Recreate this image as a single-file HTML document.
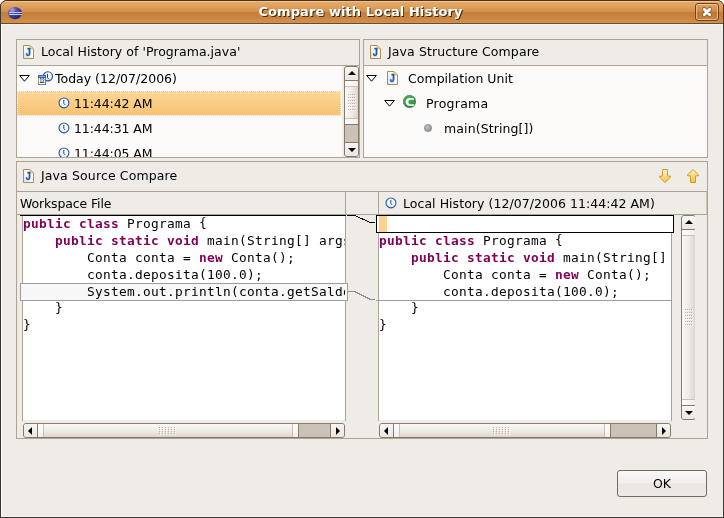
<!DOCTYPE html>
<html>
<head>
<meta charset="utf-8">
<title>Compare with Local History</title>
<style>
html,body{margin:0;padding:0;}
body{width:724px;height:518px;position:relative;overflow:hidden;background:#fff;
  font-family:"DejaVu Sans","Liberation Sans",sans-serif;font-size:12.5px;color:#000;}
.abs{position:absolute;}
#win{position:absolute;left:0;top:0;width:724px;height:518px;background:#EFEBE7;overflow:hidden;}
#titlebar{position:absolute;left:0;top:0;width:724px;height:24px;
  background:linear-gradient(to bottom,#4a3620 0px,#4a3620 1px,#F3C48F 1px,#F3C48F 2px,#E5A967 2px,#E0A15E 6px,#D18F4D 12px,#C57E37 12px,#C98340 17px,#D4914B 23px,#6E4A28 23px,#6E4A28 24px);}
#title{position:absolute;left:0;top:3px;width:721px;text-align:center;font-weight:bold;font-size:13px;color:#fff;
  text-shadow:1px 1px 0.5px #3d2810;line-height:17px;white-space:nowrap;letter-spacing:0.08px;}
.panel{position:absolute;border:1px solid #ADA395;box-sizing:border-box;}
.hline{position:absolute;height:1px;background:#ADA395;}
.vline{position:absolute;width:1px;background:#ADA395;}
.lbl{position:absolute;white-space:nowrap;line-height:17px;}
.tree{position:absolute;background:#FBFAF9;}
.code{position:absolute;background:#fff;overflow:hidden;}
.code pre{margin:0;position:absolute;left:0;top:0;}
.code pre,.mono{font-family:"DejaVu Sans Mono","Liberation Mono",monospace;font-size:12.8px;letter-spacing:0.2938px;line-height:17px;white-space:pre;}
.kw{color:#7F0055;font-weight:bold;}
svg{position:absolute;overflow:visible;}
/* scrollbars */
.sbclip{position:absolute;overflow:hidden;}
.sb{position:absolute;left:0;top:0;box-sizing:border-box;border:1px solid #857A6C;border-radius:3px;background:#CBC1B6;overflow:hidden;}
.sb.v{width:15px;}
.sb.h{height:15px;}
.sb .btn{position:absolute;background:linear-gradient(#F8F6F4,#EAE6E1);}
.sb .thumb{position:absolute;box-sizing:content-box;}
.sb .tv{background:linear-gradient(to right,#F9F8F6,#EFEBE7 50%,#DDD6CE);border-top:1px solid #857A6C;border-bottom:1px solid #857A6C;}
.sb .th{background:linear-gradient(to bottom,#F9F8F6,#EFEBE7 50%,#DDD6CE);border-left:1px solid #857A6C;border-right:1px solid #857A6C;}
.sb .cap{position:absolute;background:#C9C0B6;}
.sb .capf{position:absolute;background:rgba(255,255,255,0.55);}
.sb .grip{position:absolute;}
.sb .gv{width:8px;height:18px;background-image:radial-gradient(circle at 0.5px 0.5px,#B9AFA4 0.6px,transparent 0.7px),radial-gradient(circle at 1.5px 1.5px,#fff 0.6px,transparent 0.7px);background-size:2px 3px;}
.sb .gh{width:18px;height:8px;background-image:radial-gradient(circle at 0.5px 0.5px,#B9AFA4 0.6px,transparent 0.7px),radial-gradient(circle at 1.5px 1.5px,#fff 0.6px,transparent 0.7px);background-size:3px 2px;}
.ar{position:absolute;width:0;height:0;border:4px solid transparent;}
.ar.up{left:2.5px;top:3.7px;border-width:0 4px 4.5px 4px;border-bottom-color:#000;}
.ar.down{left:2.5px;top:4.8px;border-width:4.5px 4px 0 4px;border-top-color:#000;}
.ar.left{top:2.5px;left:3.7px;border-width:4px 4.5px 4px 0;border-right-color:#000;}
.ar.right{top:2.5px;left:4.8px;border-width:4px 0 4px 4.5px;border-left-color:#000;}
.lbl,.code pre,.mono,#title,svg.t{will-change:transform;}
.bu,.pu{font-style:normal;position:relative;}
.bu{top:-1.6px;}
.pu{top:-1px;}
</style>
</head>
<body>
<div id="win">
  <div id="titlebar"></div>
  <!-- window corner cut-outs -->
  <svg style="left:0;top:0;" width="724" height="24" viewBox="0 0 724 24">
    <path d="M0 0H5.5Q1.5 1.5 0 5.5Z" fill="#fff"/>
    <path d="M0 5.5Q1.5 1.5 5.5 0.5" fill="none" stroke="#5a3a18" stroke-width="1"/>
    <path d="M724 0H718.5Q722.5 1.5 724 5.5Z" fill="#fff"/>
    <path d="M724 5.5Q722.5 1.5 718.5 0.5" fill="none" stroke="#5a3a18" stroke-width="1"/>
  </svg>
  <!-- eclipse icon -->
  <svg style="left:8px;top:6px;" width="14" height="14" viewBox="0 0 14 14">
    <defs><radialGradient id="ecl" cx="0.3" cy="0.25" r="0.85"><stop offset="0" stop-color="#B9A6E0"/><stop offset="0.35" stop-color="#5A4FB0"/><stop offset="1" stop-color="#161A6E"/></radialGradient></defs>
    <ellipse cx="7" cy="7.1" rx="7" ry="6.2" fill="url(#ecl)"/>
    <rect x="0.8" y="6" width="13.2" height="1" fill="#B4D0F0"/>
    <rect x="0.8" y="8" width="13.2" height="1" fill="#B4D0F0"/>
  </svg>
  <div id="title">Compare with Local History</div>
  <!-- close button -->
  <div class="abs" style="left:695px;top:3px;width:24px;height:18px;box-sizing:border-box;border:1px solid #6E4520;border-radius:3px;
    background:linear-gradient(#E2A366,#CF8B48 45%,#BE7733 50%,#C98441);box-shadow:inset 0 0 0 1px rgba(255,225,190,0.55);"></div>
  <svg style="left:702px;top:7px;" width="10" height="10" viewBox="0 0 10 10">
    <path d="M2.2 2.2L7.8 7.8M7.8 2.2L2.2 7.8" stroke="#5b3a1a" stroke-width="4.4" stroke-linecap="round" opacity="0.6"/>
    <path d="M2.2 2.2L7.8 7.8M7.8 2.2L2.2 7.8" stroke="#fff" stroke-width="2.9" stroke-linecap="round"/>
  </svg>
  <!-- window borders -->
  <div class="abs" style="left:0;top:5px;width:1px;height:513px;background:#3C3732;"></div>
  <div class="abs" style="left:1px;top:24px;width:1px;height:493px;background:#FFFFFF;"></div>
  <div class="abs" style="left:723px;top:5px;width:1px;height:513px;background:#3C3732;"></div>
  <div class="abs" style="left:722px;top:24px;width:1px;height:493px;background:#F4F1EE;"></div>
  <div class="abs" style="left:0;top:517px;width:724px;height:1px;background:#3C3732;"></div>
  <div class="abs" style="left:1px;top:516px;width:722px;height:1px;background:#F4F1EE;"></div>
  <div class="abs" style="left:1px;top:24px;width:722px;height:1px;background:#FAF9F8;"></div>

  <!-- top-left panel -->
  <div class="panel" style="left:16px;top:39px;width:344px;height:119px;"></div>
  <div class="hline" style="left:17px;top:65px;width:342px;"></div>
  <div class="tree" style="left:17px;top:66px;width:325px;height:91px;"></div>
  <svg class="t" style="left:23px;top:45px;" width="11" height="14" viewBox="0 0 11 14">
<defs><linearGradient id="jf1" x1="0" y1="1" x2="1" y2="0"><stop offset="0" stop-color="#CFE0F6"/><stop offset="0.65" stop-color="#FFFFFF"/></linearGradient></defs>
<path d="M0.5 0.5H7L10.5 4V13.5H0.5Z" fill="url(#jf1)" stroke="#B08F45" stroke-width="1"/>
<path d="M7 0.5V4H10.5Z" fill="#F2D9A0" stroke="#C9A659" stroke-width="0.6"/>
<text transform="translate(2.7 10.9) scale(0.84 1)" font-family="Liberation Sans, sans-serif" font-weight="bold" font-size="10.8" fill="#2159A8" stroke="#2159A8" stroke-width="0.35">J</text>
</svg>
  <div class="lbl" style="letter-spacing:0.035px;left:41px;top:43px;">Local History of 'Programa.java'</div>
  <div class="abs" style="left:17px;top:91px;width:324px;height:25px;box-sizing:border-box;border:1px dotted #FEF8EE;background:linear-gradient(#FDD595,#F8C374);"></div>
  <svg style="left:19px;top:75px;" width="11" height="7" viewBox="0 0 11 7"><path d="M0.7 0.5H10.3L5.5 6.2Z" fill="#fff" stroke="#000" stroke-width="1" stroke-linejoin="miter"/></svg>
  <!-- today icon -->
  <svg class="t" style="left:38px;top:70px;" width="16" height="16" viewBox="0 0 16 16">
    <defs><radialGradient id="tck" cx="0.6" cy="0.35" r="0.75"><stop offset="0" stop-color="#FFFFFF"/><stop offset="0.5" stop-color="#F4F9FE"/><stop offset="1" stop-color="#BBD6F3"/></radialGradient></defs>
    <circle cx="9.9" cy="6.3" r="4.55" fill="url(#tck)" stroke="#1B4C98" stroke-width="1.2"/>
    <path d="M9.5 3.8V7.8L10.9 9.2" fill="none" stroke="#1A3C80" stroke-width="1"/>
    <rect x="0" y="5" width="8" height="10" fill="#6F7F9E"/>
    <rect x="1" y="8" width="6" height="6" fill="#fff"/>
    <rect x="0" y="8" width="1" height="5" fill="#B59D5C"/>
    <rect x="0" y="5" width="8" height="3" fill="#3567BC"/>
    <rect x="1" y="6" width="6" height="1" fill="#7FA8E6"/>
    <text transform="translate(1.4 13.05) scale(0.7 1)" font-family="Liberation Sans, sans-serif" font-weight="bold" font-size="6.9" fill="#142868">12</text>
  </svg>
  <div class="lbl" style="left:55px;top:70px;">Today (12/07/2006)</div>
  <svg style="left:57.5px;top:96.5px;" width="12" height="12" viewBox="0 0 12 12">
<defs><radialGradient id="ck5" cx="0.6" cy="0.35" r="0.75"><stop offset="0" stop-color="#FFFFFF"/><stop offset="0.5" stop-color="#F4F9FE"/><stop offset="1" stop-color="#BBD6F3"/></radialGradient></defs>
<circle cx="5.95" cy="5.95" r="4.95" fill="url(#ck5)" stroke="#2158A8" stroke-width="1.08"/>
<path d="M5.8 3V6.4L7.1 7.9" fill="none" stroke="#1A3C80" stroke-width="1"/>
</svg>
  <div class="lbl" style="letter-spacing:-0.09px;left:74px;top:95px;">11:44:42 AM</div>
  <svg style="left:57.5px;top:121.5px;" width="12" height="12" viewBox="0 0 12 12">
<defs><radialGradient id="ck6" cx="0.6" cy="0.35" r="0.75"><stop offset="0" stop-color="#FFFFFF"/><stop offset="0.5" stop-color="#F4F9FE"/><stop offset="1" stop-color="#BBD6F3"/></radialGradient></defs>
<circle cx="5.95" cy="5.95" r="4.95" fill="url(#ck6)" stroke="#2158A8" stroke-width="1.08"/>
<path d="M5.8 3V6.4L7.1 7.9" fill="none" stroke="#1A3C80" stroke-width="1"/>
</svg>
  <div class="lbl" style="letter-spacing:-0.09px;left:74px;top:120px;">11:44:31 AM</div>
  <div class="abs" style="left:17px;top:141px;width:327px;height:16px;overflow:hidden;">
    <div class="abs" style="left:-17px;top:-141px;">
    <svg style="left:57.5px;top:146.5px;" width="12" height="12" viewBox="0 0 12 12">
<defs><radialGradient id="ck7" cx="0.6" cy="0.35" r="0.75"><stop offset="0" stop-color="#FFFFFF"/><stop offset="0.5" stop-color="#F4F9FE"/><stop offset="1" stop-color="#BBD6F3"/></radialGradient></defs>
<circle cx="5.95" cy="5.95" r="4.95" fill="url(#ck7)" stroke="#2158A8" stroke-width="1.08"/>
<path d="M5.8 3V6.4L7.1 7.9" fill="none" stroke="#1A3C80" stroke-width="1"/>
</svg>
    <div class="lbl" style="letter-spacing:-0.09px;left:74px;top:145px;">11:44:05 AM</div>
    </div>
  </div>
  <div class="sbclip" style="left:344px;top:66px;width:15px;height:91px;"><div class="sb v" style="height:91px;"><div class="btn" style="left:0;top:0;width:13px;height:13px;border-bottom:1px solid #857A6C;"><i class="ar up"></i></div><div class="thumb tv" style="left:0;top:13px;width:13px;height:43px;"><b class="capf" style="left:0;top:0;width:13px;height:5px;"></b><b class="capf" style="left:0;top:38px;width:13px;height:5px;"></b><b class="cap" style="left:0;top:5px;width:13px;height:1px;"></b><b class="cap" style="left:0;top:37px;width:13px;height:1px;"></b><u class="grip gv" style="left:3px;top:13px;"></u></div><div class="btn" style="left:0;top:75px;width:13px;height:13px;border-top:1px solid #857A6C;"><i class="ar down"></i></div></div></div>

  <!-- top-right panel -->
  <div class="panel" style="left:363px;top:39px;width:345px;height:119px;"></div>
  <div class="hline" style="left:364px;top:65px;width:343px;"></div>
  <div class="tree" style="left:364px;top:66px;width:343px;height:91px;"></div>
  <svg class="t" style="left:370px;top:45px;" width="11" height="14" viewBox="0 0 11 14">
<defs><linearGradient id="jf2" x1="0" y1="1" x2="1" y2="0"><stop offset="0" stop-color="#CFE0F6"/><stop offset="0.65" stop-color="#FFFFFF"/></linearGradient></defs>
<path d="M0.5 0.5H7L10.5 4V13.5H0.5Z" fill="url(#jf2)" stroke="#B08F45" stroke-width="1"/>
<path d="M7 0.5V4H10.5Z" fill="#F2D9A0" stroke="#C9A659" stroke-width="0.6"/>
<text transform="translate(2.7 10.9) scale(0.84 1)" font-family="Liberation Sans, sans-serif" font-weight="bold" font-size="10.8" fill="#2159A8" stroke="#2159A8" stroke-width="0.35">J</text>
</svg>
  <div class="lbl" style="letter-spacing:0.1px;left:388px;top:43px;">Java Structure Compare</div>
  <svg style="left:366px;top:75px;" width="11" height="7" viewBox="0 0 11 7"><path d="M0.7 0.5H10.3L5.5 6.2Z" fill="#fff" stroke="#000" stroke-width="1" stroke-linejoin="miter"/></svg>
  <svg class="t" style="left:387px;top:71px;" width="11" height="14" viewBox="0 0 11 14">
<defs><linearGradient id="jf3" x1="0" y1="1" x2="1" y2="0"><stop offset="0" stop-color="#CFE0F6"/><stop offset="0.65" stop-color="#FFFFFF"/></linearGradient></defs>
<path d="M0.5 0.5H7L10.5 4V13.5H0.5Z" fill="url(#jf3)" stroke="#B08F45" stroke-width="1"/>
<path d="M7 0.5V4H10.5Z" fill="#F2D9A0" stroke="#C9A659" stroke-width="0.6"/>
<text transform="translate(2.7 10.9) scale(0.84 1)" font-family="Liberation Sans, sans-serif" font-weight="bold" font-size="10.8" fill="#2159A8" stroke="#2159A8" stroke-width="0.35">J</text>
</svg>
  <div class="lbl" style="letter-spacing:0.03px;left:408px;top:70px;">Compilation Unit</div>
  <svg style="left:384px;top:100px;" width="11" height="7" viewBox="0 0 11 7"><path d="M0.7 0.5H10.3L5.5 6.2Z" fill="#fff" stroke="#000" stroke-width="1" stroke-linejoin="miter"/></svg>
  <svg class="t" style="left:403px;top:95px;" width="13" height="13" viewBox="0 0 13 13">
    <defs><radialGradient id="cg" cx="0.4" cy="0.3" r="0.8"><stop offset="0" stop-color="#5DB466"/><stop offset="1" stop-color="#1F7A30"/></radialGradient></defs>
    <circle cx="6.5" cy="6.5" r="6.2" fill="url(#cg)" stroke="#2B8238" stroke-width="0.6"/>
    <text transform="translate(6.75 10.55) scale(1.22 1)" text-anchor="middle" font-family="DejaVu Sans, Liberation Sans, sans-serif" font-weight="bold" font-size="10.8" fill="#fff">C</text>
  </svg>
  <div class="lbl" style="letter-spacing:0.25px;left:426px;top:95px;">Programa</div>
  <svg style="left:424px;top:124px;" width="8" height="8" viewBox="0 0 8 8">
    <defs><radialGradient id="mg" cx="0.4" cy="0.35" r="0.7"><stop offset="0" stop-color="#C4C4C4"/><stop offset="1" stop-color="#8C8C8C"/></radialGradient></defs>
    <circle cx="4" cy="4" r="3.6" fill="url(#mg)" stroke="#7C8290" stroke-width="0.7"/>
  </svg>
  <div class="lbl" style="letter-spacing:0.11px;left:444px;top:120px;">main(String[])</div>

  <!-- bottom panel -->
  <div class="panel" style="left:16px;top:161px;width:692px;height:278px;"></div>
  <div class="hline" style="left:17px;top:191px;width:690px;"></div>
  <svg class="t" style="left:23px;top:169px;" width="11" height="14" viewBox="0 0 11 14">
<defs><linearGradient id="jf4" x1="0" y1="1" x2="1" y2="0"><stop offset="0" stop-color="#CFE0F6"/><stop offset="0.65" stop-color="#FFFFFF"/></linearGradient></defs>
<path d="M0.5 0.5H7L10.5 4V13.5H0.5Z" fill="url(#jf4)" stroke="#B08F45" stroke-width="1"/>
<path d="M7 0.5V4H10.5Z" fill="#F2D9A0" stroke="#C9A659" stroke-width="0.6"/>
<text transform="translate(2.7 10.9) scale(0.84 1)" font-family="Liberation Sans, sans-serif" font-weight="bold" font-size="10.8" fill="#2159A8" stroke="#2159A8" stroke-width="0.35">J</text>
</svg>
  <div class="lbl" style="letter-spacing:0.126px;left:41px;top:167px;">Java Source Compare</div>
  <!-- arrows -->
  <svg style="left:659px;top:169px;" width="12" height="14" viewBox="0 0 12 14">
    <defs><linearGradient id="ag1" x1="0" y1="0" x2="0" y2="1"><stop offset="0" stop-color="#FFF6D6"/><stop offset="1" stop-color="#F5C040"/></linearGradient></defs>
    <path d="M3.5 0.5H8.5V7.2H11.5V8.1L6 13.6L0.5 8.1V7.2H3.5Z" fill="url(#ag1)" stroke="#CC9E26" stroke-width="1" stroke-linejoin="round"/>
  </svg>
  <svg style="left:687px;top:169px;" width="12" height="14" viewBox="0 0 12 14">
    <defs><linearGradient id="ag2" x1="0" y1="0" x2="0" y2="1"><stop offset="0" stop-color="#FFF0B8"/><stop offset="1" stop-color="#F5C040"/></linearGradient></defs>
    <path d="M6 0.4L11.5 5.9V6.8H8.5V13.5H3.5V6.8H0.5V5.9Z" fill="url(#ag2)" stroke="#CC9E26" stroke-width="1" stroke-linejoin="round"/>
  </svg>
  <div class="lbl" style="letter-spacing:-0.135px;left:20px;top:195px;">Workspace File</div>
  <svg style="left:384.5px;top:196.5px;" width="12" height="12" viewBox="0 0 12 12">
<defs><radialGradient id="ck8" cx="0.6" cy="0.35" r="0.75"><stop offset="0" stop-color="#FFFFFF"/><stop offset="0.5" stop-color="#F4F9FE"/><stop offset="1" stop-color="#BBD6F3"/></radialGradient></defs>
<circle cx="5.95" cy="5.95" r="4.95" fill="url(#ck8)" stroke="#2158A8" stroke-width="1.08"/>
<path d="M5.8 3V6.4L7.1 7.9" fill="none" stroke="#1A3C80" stroke-width="1"/>
</svg>
  <div class="lbl" style="letter-spacing:0.047px;left:403px;top:195px;">Local History (12/07/2006 11:44:42 AM)</div>
  <div class="hline" style="left:17px;top:214px;width:690px;"></div>
  <div class="vline" style="left:345px;top:192px;height:229px;"></div>
  <div class="vline" style="left:378px;top:192px;height:229px;"></div>
  <div class="vline" style="left:706px;top:192px;height:22px;background:#C9C1B6;"></div>

  <!-- left code -->
  <div class="vline" style="left:22px;top:215px;height:206px;"></div>
  <div class="code" style="left:23px;top:215px;width:322px;height:205px;">
<pre><span class="kw">public</span> <span class="kw">class</span> Programa <i class="bu">{</i>
    <span class="kw">public</span> <span class="kw">static</span> <span class="kw">void</span> main<i class="pu">(</i>String<i class="pu">[]</i> args<i class="pu">)</i> <i class="bu">{</i>
        Conta conta = <span class="kw">new</span> Conta<i class="pu">()</i>;
        conta.deposita<i class="pu">(</i>100.0<i class="pu">)</i>;
        System.out.println<i class="pu">(</i>conta.getSaldo<i class="pu">())</i>;
    <i class="bu">}</i>
<i class="bu">}</i></pre>
  </div>
  <!-- left diff box -->
  <div class="abs" style="left:20px;top:283px;width:328px;height:18px;box-sizing:border-box;border:1px solid #9C9C9C;background:#F7F7F7;overflow:hidden;">
    <div class="abs" style="left:0;top:0;width:324px;height:16px;overflow:hidden;"><pre class="mono" style="margin:0;position:absolute;left:2px;top:-1px;">        System.out.println<i class="pu">(</i>conta.getSaldo<i class="pu">())</i>;</pre></div>
  </div>
  <div class="abs" style="left:20px;top:215px;width:326px;height:1px;background:#000;"></div>

  <!-- right code -->
  <div class="code" style="left:379px;top:215px;width:292px;height:205px;">
<pre>

<span class="kw">public</span> <span class="kw">class</span> Programa <i class="bu">{</i>
    <span class="kw">public</span> <span class="kw">static</span> <span class="kw">void</span> main<i class="pu">(</i>String<i class="pu">[]</i> args<i class="pu">)</i> <i class="bu">{</i>
        Conta conta = <span class="kw">new</span> Conta<i class="pu">()</i>;
        conta.deposita<i class="pu">(</i>100.0<i class="pu">)</i>;
    <i class="bu">}</i>
<i class="bu">}</i></pre>
  </div>
  <div class="vline" style="left:671px;top:215px;height:206px;"></div>
  <div class="abs" style="left:376px;top:300px;width:296px;height:1px;background:#9C9C9C;"></div>
  <!-- right diff box -->
  <div class="abs" style="left:376px;top:215px;width:298px;height:18px;box-sizing:border-box;border:1px solid #000;background:#fff;"></div>
  <div class="abs" style="left:379px;top:216px;width:8px;height:16px;background:#FCD28C;"></div>
  <!-- connectors -->
  <svg style="left:346px;top:210px;" width="32" height="100" viewBox="0 0 32 100">
    <path d="M1 5.5H8.5L24.5 12.5H29" fill="none" stroke="#000" stroke-width="1" shape-rendering="crispEdges"/>
    <path d="M2 81.5H8.5L24.5 89.5H29" fill="none" stroke="#8E8E8E" stroke-width="1" shape-rendering="crispEdges"/>
  </svg>
  <div class="sbclip" style="left:23px;top:423px;width:322px;height:15px;"><div class="sb h" style="width:322px;"><div class="btn" style="left:0;top:0;width:13px;height:13px;border-right:1px solid #857A6C;"><i class="ar left"></i></div><div class="thumb th" style="left:13px;top:0;width:260px;height:13px;"><b class="capf" style="top:0;left:0;height:13px;width:5px;"></b><b class="capf" style="top:0;left:255px;height:13px;width:5px;"></b><b class="cap" style="top:0;left:5px;height:13px;width:1px;"></b><b class="cap" style="top:0;left:254px;height:13px;width:1px;"></b><u class="grip gh" style="top:3px;left:121px;"></u></div><div class="btn" style="top:0;left:306px;width:13px;height:13px;border-left:1px solid #857A6C;"><i class="ar right"></i></div></div></div>
  <div class="sbclip" style="left:379px;top:423px;width:292px;height:15px;"><div class="sb h" style="width:292px;"><div class="btn" style="left:0;top:0;width:13px;height:13px;border-right:1px solid #857A6C;"><i class="ar left"></i></div><div class="thumb th" style="left:13px;top:0;width:216px;height:13px;"><b class="capf" style="top:0;left:0;height:13px;width:5px;"></b><b class="capf" style="top:0;left:211px;height:13px;width:5px;"></b><b class="cap" style="top:0;left:5px;height:13px;width:1px;"></b><b class="cap" style="top:0;left:210px;height:13px;width:1px;"></b><u class="grip gh" style="top:3px;left:99px;"></u></div><div class="btn" style="top:0;left:276px;width:13px;height:13px;border-left:1px solid #857A6C;"><i class="ar right"></i></div></div></div>
  <div class="sbclip" style="left:681px;top:215px;width:14px;height:205px;"><div class="sb v" style="height:205px;"><div class="btn" style="left:0;top:0;width:13px;height:13px;border-bottom:1px solid #857A6C;"><i class="ar up"></i></div><div class="thumb tv" style="left:0;top:13px;width:13px;height:175px;"><b class="capf" style="left:0;top:0;width:13px;height:5px;"></b><b class="capf" style="left:0;top:170px;width:13px;height:5px;"></b><b class="cap" style="left:0;top:5px;width:13px;height:1px;"></b><b class="cap" style="left:0;top:169px;width:13px;height:1px;"></b><u class="grip gv" style="left:3px;top:79px;"></u></div><div class="btn" style="left:0;top:189px;width:13px;height:13px;border-top:1px solid #857A6C;"><i class="ar down"></i></div></div></div>

  <!-- OK button -->
  <div class="abs" style="left:617px;top:470px;width:90px;height:27px;box-sizing:border-box;border:1px solid #746B60;border-radius:3px;
     background:linear-gradient(#F9F8F6,#F1EEEB 48%,#E9E5E0 52%,#EEEAE6);"></div>
  <div class="lbl" style="left:617px;top:475px;width:90px;text-align:center;">OK</div>
</div>
</body>
</html>
